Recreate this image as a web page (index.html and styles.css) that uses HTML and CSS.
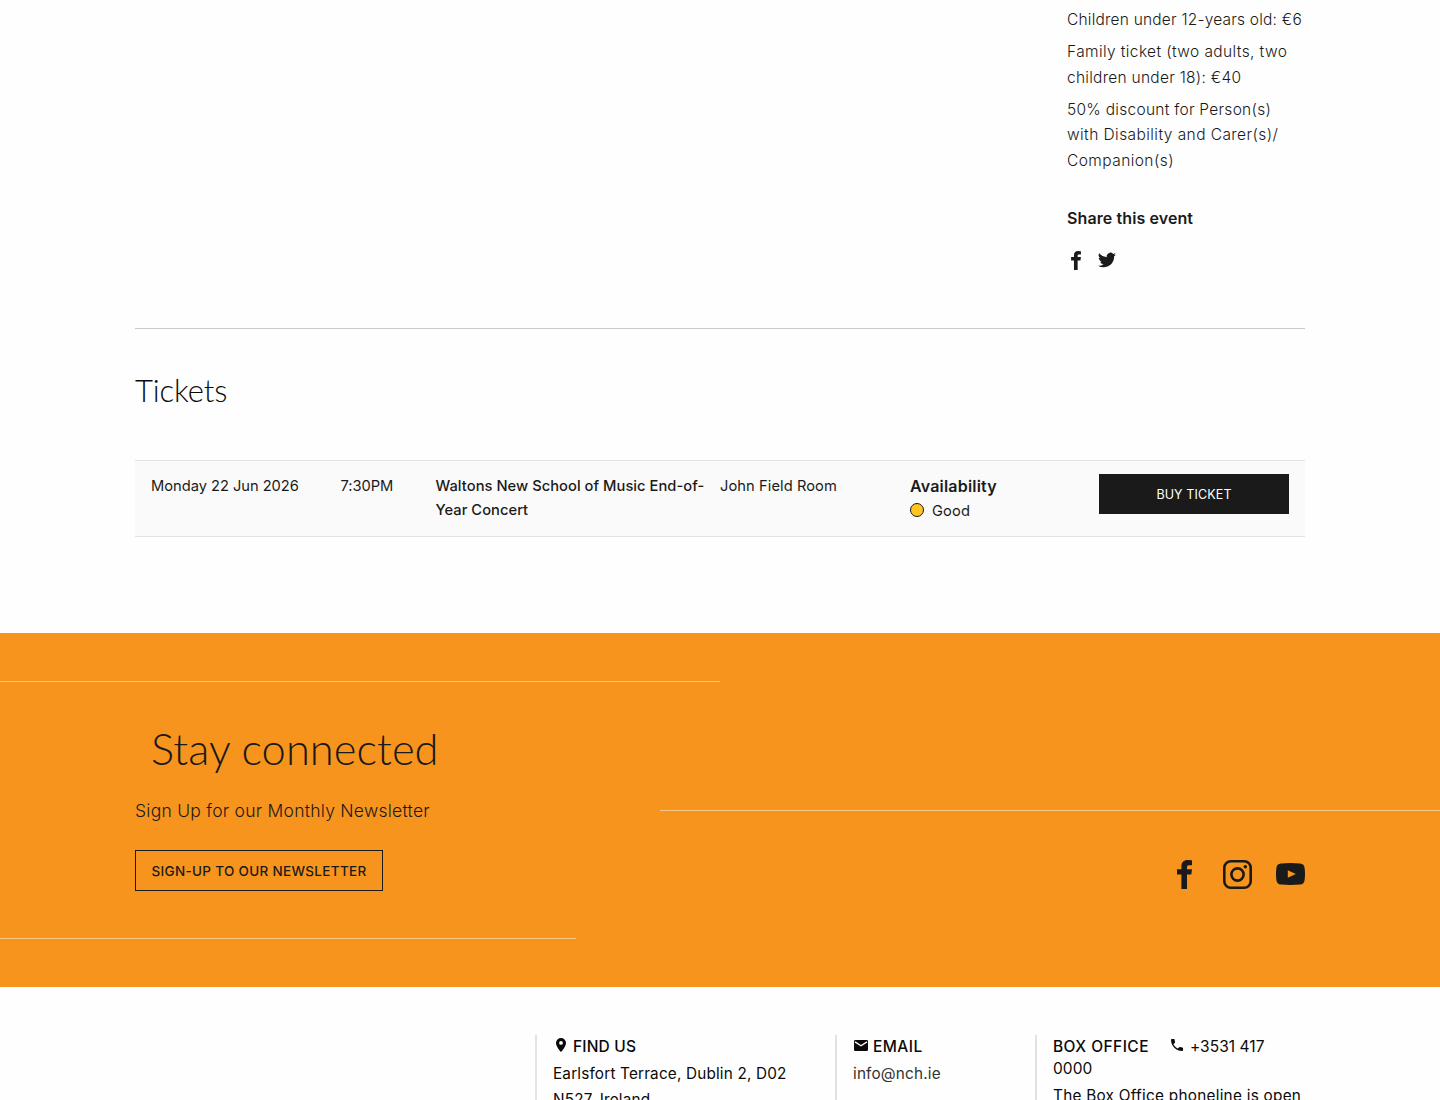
FILE: index.html
```html
<!DOCTYPE html>
<html lang="en">
<head>
<meta charset="utf-8">
<title>Waltons New School of Music End-of-Year Concert</title>
<link rel="stylesheet" href="styles.css">
</head>
<body>
<svg class="defs" aria-hidden="true">
  <symbol id="facebook" viewBox="0 0 15 29"><path d="M15 .2v5.100h-3.200c-1.400 0-1.800.8-1.800 2v2h5l-.7 5.200H10V29H4.400V14.500H0V9.300h4.400V6.300C4.400 2.200 6.900 0 10.600 0Z"/></symbol>
</svg>
<main>
  <div class="container">
    <aside class="details">
      <p class="prices">Children under 12-years old: €6</p>
      <p class="family">Family ticket (two adults, two<br><span>children under 18): €40</span></p>
      <p class="discount"><span>50% discount for Person(s)</span><br>with Disability and Carer(s)/<br>Companion(s)</p>
      <h4>Share this event</h4>
      <div class="share">
        <svg class="share-fb"><use href="#facebook"/></svg>
        <svg class="share-tw" viewBox="0 0 24 24"><path d="M24 4.600a10 10 0 0 1-2.800.8 5 5 0 0 0 2.100-2.700 10 10 0 0 1-3.100 1.200 4.900 4.900 0 0 0-8.400 4.500A14 14 0 0 1 1.700 3.100a4.900 4.900 0 0 0 1.500 6.600 5 5 0 0 1-2.200-.6c0 2.300 1.600 4.400 3.900 4.900a5 5 0 0 1-2.200.1 4.900 4.900 0 0 0 4.600 3.400A9.900 9.900 0 0 1 0 19.500a14 14 0 0 0 7.500 2.200c9.100 0 14.300-7.700 14-14.600A10 10 0 0 0 24 4.600Z"/></svg>
      </div>
    </aside>
    <section class="tickets">
      <h2>Tickets</h2>
      <div class="ticket">
        <div>Monday 22 Jun 2026</div>
        <div>7:30PM</div>
        <div class="title">Waltons New School of Music End-of-<br>Year Concert</div>
        <div class="venue">John Field Room</div>
        <div class="availability"><strong>Availability</strong><span><i class="dot"></i>Good</span></div>
        <a class="buy">BUY TICKET</a>
      </div>
    </section>
  </div>
</main>
<section class="connect">
  <hr class="rule rule-top">
  <div class="container connect-body">
    <div class="newsletter">
      <h3>Stay connected</h3>
      <p>Sign Up for our Monthly Newsletter</p>
      <a class="signup">SIGN-UP TO OUR NEWSLETTER</a>
    </div>
    <div class="social">
      <svg class="fb"><use href="#facebook"/></svg>
      <svg class="ig" viewBox="0 0 29 29"><rect x="1.300" y="1.300" width="26.400" height="26.400" rx="6.500"/><circle cx="14.500" cy="14.500" r="6.100"/><circle class="lens" cx="22.300" cy="6.700" r="1.750"/></svg>
      <svg class="yt" viewBox="0 0 29 22"><path fill-rule="evenodd" d="M5 .4Q14.500-.4 24 .4 28.300.8 28.600 5q.8 6 0 12-.3 4.200-4.600 4.600-9.500.8-19 0Q.7 21.200.4 17q-.8-6 0-12Q.7.8 5 .4ZM11.800 7.200v7.600L19.800 11Z"/></svg>
    </div>
  </div>
  <hr class="rule rule-middle">
  <hr class="rule rule-bottom">
</section>
<footer>
  <div class="container footer-grid">
    <div class="column">
      <h5 class="find"><svg class="pin" viewBox="0 0 10 14"><path fill-rule="evenodd" d="M5 0a5 5 0 0 0-5 4.900C0 8.500 5 14 5 14s5-5.500 5-9.100A5 5 0 0 0 5 0Zm0 3a1.900 1.900 0 1 1 0 3.800A1.900 1.900 0 0 1 5 3Z"/></svg>FIND US</h5>
      <p>Earlsfort Terrace, Dublin 2, D02<br>N527, Ireland</p>
    </div>
    <div class="column">
      <h5><svg class="mail" viewBox="0 0 14 11"><rect width="14" height="11" rx="1.300"/><path d="m1 1.900 6 3.800 6-3.800"/></svg>EMAIL</h5>
      <p class="mail-link">info@nch.ie</p>
    </div>
    <div class="column">
      <h5>BOX OFFICE<svg class="phone" viewBox="3 3 18 18"><path d="M6.600 10.800c1.400 2.800 3.800 5.100 6.600 6.600l2.200-2.200c.3-.3.700-.4 1-.2 1.100.4 2.300.6 3.600.6.600 0 1 .4 1 1V20c0 .6-.4 1-1 1A17 17 0 0 1 3 4c0-.6.400-1 1-1h3.500c.6 0 1 .4 1 1 0 1.300.2 2.500.6 3.600.1.300 0 .7-.2 1Z"/></svg><span>+3531 417<br>0000</span></h5>
      <p class="hours">The Box Office phoneline is open</p>
    </div>
  </div>
</footer>
</body>
</html>
```
FILE: styles.css
```css
* { box-sizing: border-box; }

body {
  display: flex;
  flex-direction: column;
  height: 1100px;
  margin: 0;
  overflow: hidden;
  background: #fefefe;
  color: #1a1a1a;
  font: 400 15.500px/25.600px Inter, sans-serif;
}

h2, h3, h4, h5, p { margin: 0; }
svg { fill: #1a1a1a; }
.defs { display: none; }
.container { width: 1170px; margin: 0 auto; }

main { flex: 0 0 633px; }

.details {
  height: 329px;
  padding: 7px 0 0 932px;
  border-bottom: 1px solid #cacaca;
}
.details p { margin-bottom: 6.400px; font-weight: 350; white-space: nowrap; }
.prices { letter-spacing: .21px; }
.family { letter-spacing: .39px; }
.family span, .discount span { letter-spacing: .27px; }
.discount { letter-spacing: .43px; }
.details h4 {
  margin-top: 32px;
  font-size: 16px;
  font-weight: 600;
  line-height: 26px;
  letter-spacing: .1px;
}
.share { display: flex; align-items: center; gap: 17px; margin-top: 19.500px; padding-left: 4px; }
.share-fb { width: 10px; height: 19px; }
.share-tw { width: 18px; height: 18px; }

.tickets { padding-top: 41px; }
.tickets h2 {
  height: 90px;
  color: #0a0a0a;
  font: 300 31px/40px Lato, sans-serif;
  letter-spacing: -.1px;
}
.ticket {
  display: grid;
  grid-template-columns: 189.500px 95px 284.500px 190px 189px 190px;
  height: 77px;
  padding: 13px 16px;
  background: #fafafa;
  border: solid #e2e2e2;
  border-width: 1px 0;
  font-size: 14.700px;
  line-height: 24px;
  letter-spacing: -.03px;
  white-space: nowrap;
}
.title { font-weight: 500; letter-spacing: .04px; }
.venue { letter-spacing: .07px; }
.availability { display: flex; flex-direction: column; }
.availability strong { font-size: 16px; font-weight: 600; line-height: 25px; letter-spacing: .2px; }
.availability span { display: flex; align-items: center; gap: 8px; letter-spacing: .15px; }
.dot {
  width: 14px;
  height: 14px;
  margin-top: -3px;
  background: #ffc421;
  border: 1px solid #1a1a1a;
  border-radius: 50%;
}
.buy {
  height: 40px;
  background: #1a1a1a;
  color: #fefefe;
  font-size: 12.500px;
  line-height: 41px;
  letter-spacing: .12px;
  text-align: center;
}

.connect {
  display: flex;
  position: relative;
  flex: 0 0 354px;
  background: #f7941d;
}
.rule {
  position: absolute;
  height: 1px;
  margin: 0;
  background: #fbc788;
  border: 0;
}
.rule-top { top: 48px; left: 0; width: 50%; }
.rule-middle { top: 177px; right: 0; width: 780px; }
.rule-bottom { top: 305px; left: 0; width: 40%; }
.connect-body { display: flex; justify-content: space-between; padding-top: 85px; }
.newsletter h3 {
  padding-left: 16px;
  font: 300 43.500px/60px Lato, sans-serif;
  letter-spacing: .02px;
}
.newsletter p {
  margin: 19px 0 25px;
  font-size: 17.500px;
  font-weight: 300;
  line-height: 28px;
  letter-spacing: .26px;
}
.signup {
  display: block;
  width: 248px;
  height: 41px;
  border: 1px solid #1a1a1a;
  font-size: 13.500px;
  font-weight: 500;
  line-height: 41px;
  letter-spacing: .32px;
  text-align: center;
  white-space: nowrap;
}
.social { display: flex; align-items: center; height: 29px; margin-top: 142px; }
.fb { width: 15px; height: 29px; margin-right: 31px; }
.ig { width: 29px; height: 29px; margin-right: 24px; }
.ig { fill: none; stroke: #1a1a1a; stroke-width: 2.600; }
.lens { fill: #1a1a1a; stroke: none; }
.yt { width: 29px; height: 22px; margin-bottom: 1px; }

footer { flex: 0 0 113px; overflow: hidden; color: #0a0a0a; }
.footer-grid {
  display: grid;
  grid-template-columns: 300px 200px 270px;
  justify-content: end;
  padding-top: 48px;
}
.column {
  height: 65px;
  padding-left: 16px;
  border-left: 2px solid #e2e2e2;
  font-size: 15.300px;
  letter-spacing: .18px;
  white-space: nowrap;
}
.column h5 {
  padding-top: 1px;
  margin-bottom: 3px;
  font-size: 15.500px;
  font-weight: 500;
  line-height: 22px;
  letter-spacing: .44px;
}
.column h5.find { letter-spacing: .17px; }
.column h5 span { font-weight: 400; letter-spacing: .05px; }
.column svg { fill: #0a0a0a; }
.pin { width: 10px; height: 14px; margin: 0 7px 0 3px; }
.mail { width: 14px; height: 11px; margin: 0 5px 1px 1px; }
.mail path { fill: none; stroke: #fefefe; stroke-width: 1.300; }
.mail-link { color: #333; }
.hours { letter-spacing: .27px; }
.phone { width: 12px; height: 12px; margin: 0 7px 1px 22px; }
```
